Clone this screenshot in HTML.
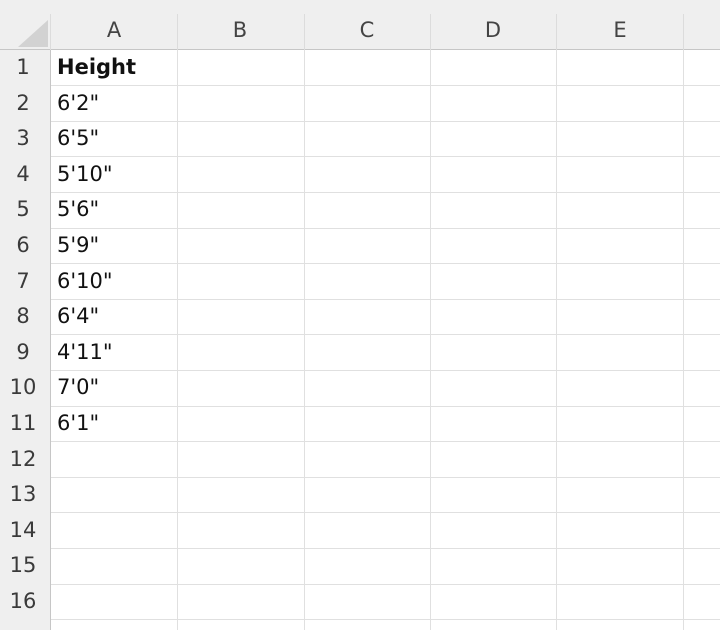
<!DOCTYPE html>
<html><head><style>
body{margin:0;width:720px;height:630px;background:#fff;position:relative;overflow:hidden;font-family:"DejaVu Sans","Liberation Sans",sans-serif;}
.hdr{position:absolute;left:0;top:0;width:720px;height:49px;background:#efefef;border-bottom:1px solid #c6c6c6;}
.rh{position:absolute;left:0;top:50px;width:50px;height:580px;background:#efefef;border-right:1px solid #c6c6c6;}
.ch{position:absolute;top:18px;font-size:21px;color:#444;width:126px;text-align:center;}
.vl{position:absolute;top:50px;width:1px;height:580px;background:#e0e0e0;}
.vh{position:absolute;top:14px;width:1px;height:36px;background:#dcdcdc;}
.hl{position:absolute;left:51px;width:669px;height:1px;background:#e0e0e0;}
.rn{position:absolute;left:0;width:46px;text-align:center;font-size:21px;color:#3a3a3a;}
.c{position:absolute;left:57px;font-size:21px;color:#111;}
.tri{position:absolute;left:18px;top:20px;width:0;height:0;border-left:30px solid transparent;border-bottom:27px solid #d2d2d2;}
</style></head><body>
<div class="hdr"></div><div class="rh"></div><div class="tri"></div>
<div class="ch" style="left:51px">A</div><div class="ch" style="left:177px">B</div><div class="ch" style="left:304px">C</div><div class="ch" style="left:430px">D</div><div class="ch" style="left:557px">E</div>
<div class="vh" style="left:50px"></div><div class="vh" style="left:177px"></div><div class="vh" style="left:304px"></div><div class="vh" style="left:430px"></div><div class="vh" style="left:556px"></div><div class="vh" style="left:683px"></div>
<div class="vl" style="left:177px"></div><div class="vl" style="left:304px"></div><div class="vl" style="left:430px"></div><div class="vl" style="left:556px"></div><div class="vl" style="left:683px"></div>
<div class="hl" style="top:85px"></div><div class="hl" style="top:121px"></div><div class="hl" style="top:156px"></div><div class="hl" style="top:192px"></div><div class="hl" style="top:228px"></div><div class="hl" style="top:263px"></div><div class="hl" style="top:299px"></div><div class="hl" style="top:334px"></div><div class="hl" style="top:370px"></div><div class="hl" style="top:406px"></div><div class="hl" style="top:441px"></div><div class="hl" style="top:477px"></div><div class="hl" style="top:512px"></div><div class="hl" style="top:548px"></div><div class="hl" style="top:584px"></div><div class="hl" style="top:619px"></div>
<div class="rn" style="top:55px">1</div><div class="rn" style="top:91px">2</div><div class="rn" style="top:126px">3</div><div class="rn" style="top:162px">4</div><div class="rn" style="top:197px">5</div><div class="rn" style="top:233px">6</div><div class="rn" style="top:269px">7</div><div class="rn" style="top:304px">8</div><div class="rn" style="top:340px">9</div><div class="rn" style="top:375px">10</div><div class="rn" style="top:411px">11</div><div class="rn" style="top:447px">12</div><div class="rn" style="top:482px">13</div><div class="rn" style="top:518px">14</div><div class="rn" style="top:553px">15</div><div class="rn" style="top:589px">16</div>
<div class="c" style="top:55px;font-weight:bold">Height</div>
<div class="c" style="top:91px">6'2"</div><div class="c" style="top:126px">6'5"</div><div class="c" style="top:162px">5'10"</div><div class="c" style="top:197px">5'6"</div><div class="c" style="top:233px">5'9"</div><div class="c" style="top:269px">6'10"</div><div class="c" style="top:304px">6'4"</div><div class="c" style="top:340px">4'11"</div><div class="c" style="top:375px">7'0"</div><div class="c" style="top:411px">6'1"</div>
</body></html>
